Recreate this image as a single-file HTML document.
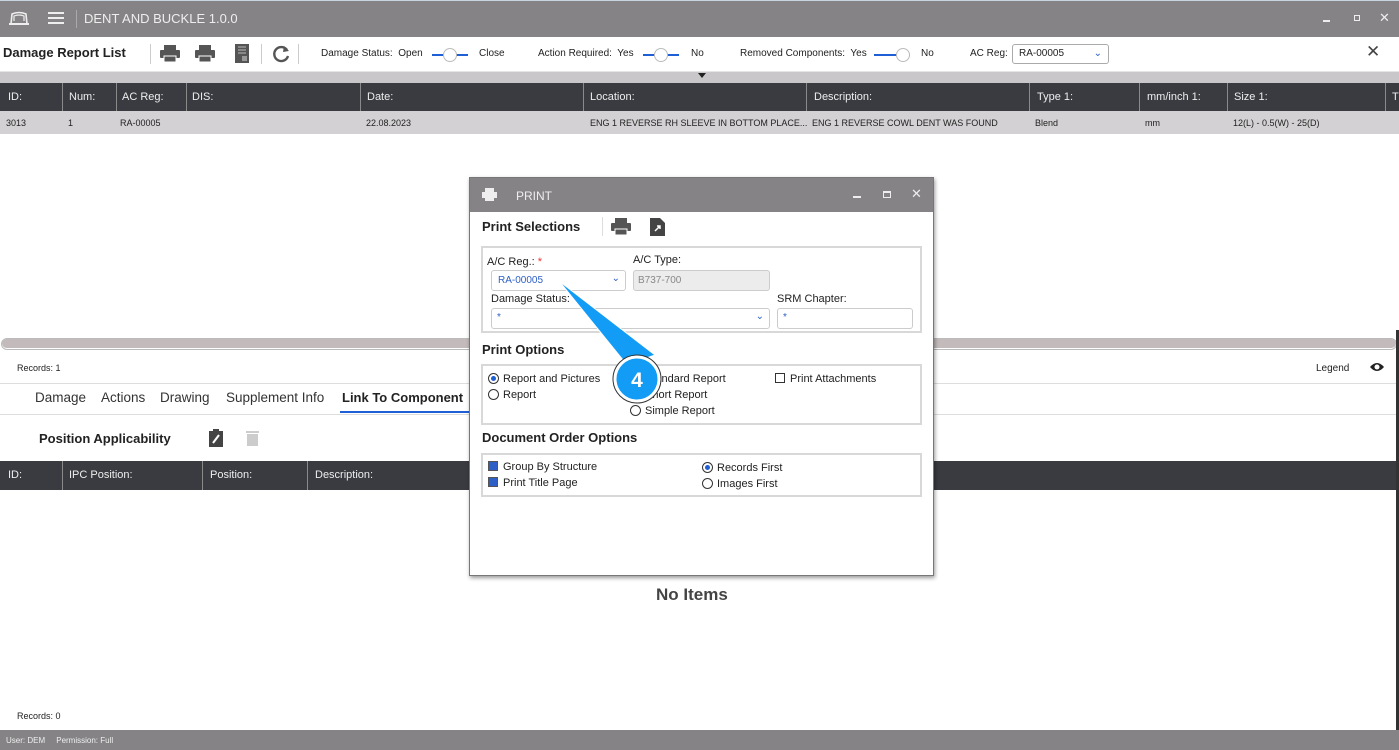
<!DOCTYPE html>
<html><head><meta charset="utf-8"><style>
*{box-sizing:border-box;margin:0;padding:0}
body{width:1399px;height:750px;overflow:hidden;background:#fff;font-family:"Liberation Sans",sans-serif;position:relative;color:#222}
.a{position:absolute;white-space:nowrap}
.s{font-size:10px}
.hdr{background:#393b41;color:#eee;font-size:11px}
.vd{position:absolute;top:0;bottom:0;width:1px;background:#8a8a8a}
.tg{position:absolute;height:2px;background:#1e5fd6;width:36px}
.tg i{position:absolute;top:-6px;width:14px;height:14px;border-radius:50%;background:#fff;border:1px solid #bbb}
.rad{display:inline-block;width:11px;height:11px;border-radius:50%;border:1.3px solid #333;vertical-align:-2px;margin-right:4px;position:relative}
.rad.on:after{content:"";position:absolute;left:1.5px;top:1.5px;width:5.5px;height:5.5px;border-radius:50%;background:#1e5fd6}
.chk{display:inline-block;width:10px;height:10px;border:1.3px solid #333;vertical-align:-1px;margin-right:5px;background:#fff}
.chk.on{background:#2d5fc7;border-color:#555}
.dl{font-size:11px;color:#222}
</style></head><body>
<div class="a" style="left:0;top:0;width:1399px;height:37px;background:#858386;border-top:1px solid #c8d4e0"></div>
<svg class="a" style="left:9px;top:11px" width="20" height="15" viewBox="0 0 20 15"><path d="M2 13 L3 3 Q10 0 17 3 L18 13 Z" fill="none" stroke="#eee" stroke-width="1.6"/><path d="M5 10 L5 5 Q10 3 15 5 L15 10" fill="none" stroke="#eee" stroke-width="1.2"/><rect x="0" y="12" width="20" height="2" fill="#eee"/></svg>
<div class="a" style="left:48px;top:12px;width:16px;height:2px;background:#eee;box-shadow:0 5px 0 #eee,0 10px 0 #eee"></div>
<div class="a" style="left:76px;top:10px;width:1px;height:18px;background:#aaa"></div>
<div class="a" style="left:84px;top:11px;font-size:13px;color:#eee">DENT AND BUCKLE 1.0.0</div>
<div class="a" style="left:1323px;top:20px;width:7px;height:2px;background:#eee"></div>
<div class="a" style="left:1354px;top:15px;width:6px;height:6px;border:1px solid #eee"></div>
<div class="a" style="left:1379px;top:10px;font-size:13px;color:#eee">✕</div>
<div class="a" style="left:3px;top:45px;font-size:13px;font-weight:bold">Damage Report List</div>
<div class="a" style="left:150px;top:44px;width:1px;height:20px;background:#ccc"></div>
<svg class="a" style="left:160px;top:45px" width="20" height="18"><rect x="4" y="0" width="12" height="5" fill="#555"/><rect x="0" y="5" width="20" height="8" rx="1" fill="#555"/><rect x="4" y="11" width="12" height="6" fill="#555" stroke="#fff" stroke-width="1"/></svg>
<svg class="a" style="left:195px;top:45px" width="20" height="18"><rect x="4" y="0" width="12" height="5" fill="#555"/><rect x="0" y="5" width="20" height="8" rx="1" fill="#555"/><rect x="4" y="11" width="12" height="6" fill="#555" stroke="#fff" stroke-width="1"/></svg>
<svg class="a" style="left:234px;top:44px" width="16" height="20"><rect x="1" y="0" width="14" height="19" fill="#555"/><path d="M4 3h8M4 6h8M4 9h8" stroke="#999" stroke-width="1.5"/><rect x="8" y="12" width="5" height="5" fill="#999"/></svg>
<div class="a" style="left:261px;top:44px;width:1px;height:20px;background:#ccc"></div>
<svg class="a" style="left:271px;top:44px" width="20" height="20"><path d="M16 6 A7 7 0 1 0 17 12" fill="none" stroke="#555" stroke-width="2.4"/><path d="M13 2 L18 7 L12 8 Z" fill="#555"/></svg>
<div class="a" style="left:298px;top:44px;width:1px;height:20px;background:#ccc"></div>
<div class="a s" style="left:321px;top:48px">Damage Status:&nbsp; Open</div>
<div class="tg" style="left:432px;top:54px"><i style="left:11px"></i></div>
<div class="a s" style="left:479px;top:48px">Close</div>
<div class="a s" style="left:538px;top:48px">Action Required:&nbsp; Yes</div>
<div class="tg" style="left:643px;top:54px"><i style="left:11px"></i></div>
<div class="a s" style="left:691px;top:48px">No</div>
<div class="a s" style="left:740px;top:48px">Removed Components:&nbsp; Yes</div>
<div class="tg" style="left:874px;top:54px"><i style="left:22px"></i></div>
<div class="a s" style="left:921px;top:48px">No</div>
<div class="a s" style="left:970px;top:48px">AC Reg:</div>
<div class="a s" style="left:1012px;top:44px;width:97px;height:20px;border:1px solid #aaa;border-radius:3px;padding:3px 6px">RA-00005<span style="position:absolute;right:6px;color:#2d5fc7">⌄</span></div>
<div class="a" style="left:1366px;top:42px;font-size:17px;color:#444">✕</div>
<div class="a" style="left:0;top:71px;width:1399px;height:12px;background:#c9c7c9;border-top:1px solid #e5e5e5"></div>
<div class="a" style="left:698px;top:73px;width:0;height:0;border-left:4px solid transparent;border-right:4px solid transparent;border-top:5px solid #222"></div>
<div class="a hdr" style="left:0;top:83px;width:1399px;height:28px">
<div class="vd" style="left:62px"></div><div class="vd" style="left:116px"></div><div class="vd" style="left:186px"></div><div class="vd" style="left:360px"></div><div class="vd" style="left:583px"></div><div class="vd" style="left:806px"></div><div class="vd" style="left:1029px"></div><div class="vd" style="left:1139px"></div><div class="vd" style="left:1227px"></div><div class="vd" style="left:1385px"></div>
<span class="a" style="left:8px;top:8px">ID:</span><span class="a" style="left:69px;top:8px">Num:</span><span class="a" style="left:122px;top:8px">AC Reg:</span><span class="a" style="left:192px;top:8px">DIS:</span><span class="a" style="left:367px;top:8px">Date:</span><span class="a" style="left:590px;top:8px">Location:</span><span class="a" style="left:814px;top:8px">Description:</span><span class="a" style="left:1037px;top:8px">Type 1:</span><span class="a" style="left:1147px;top:8px">mm/inch 1:</span><span class="a" style="left:1234px;top:8px">Size 1:</span><span class="a" style="left:1392px;top:8px">T</span></div>
<div class="a" style="left:0;top:111px;width:1399px;height:23px;background:#d3d1d3;font-size:9px">
<span class="a" style="left:6px;top:7px">3013</span><span class="a" style="left:68px;top:7px">1</span><span class="a" style="left:120px;top:7px">RA-00005</span><span class="a" style="left:366px;top:7px">22.08.2023</span><span class="a" style="left:590px;top:7px">ENG 1 REVERSE RH SLEEVE IN BOTTOM PLACE...</span><span class="a" style="left:812px;top:7px">ENG 1 REVERSE COWL DENT WAS FOUND</span><span class="a" style="left:1035px;top:7px">Blend</span><span class="a" style="left:1145px;top:7px">mm</span><span class="a" style="left:1233px;top:7px">12(L) - 0.5(W) - 25(D)</span></div>
<div class="a" style="left:1px;top:338px;width:1396px;height:12px;border:1px solid #bbb;border-radius:6px;background:#fff"></div>
<div class="a" style="left:2px;top:339px;width:1394px;height:9px;border-radius:5px;background:#c3bbbb"></div>
<div class="a" style="left:1396px;top:330px;width:3px;height:400px;background:#333"></div>
<div class="a" style="left:17px;top:363px;font-size:9px">Records: 1</div>
<div class="a" style="left:1316px;top:363px;font-size:10px">Legend</div>
<svg class="a" style="left:1369px;top:361px" width="16" height="12"><path d="M1 6 Q8 -2 15 6 Q8 14 1 6Z" fill="#222"/><circle cx="8" cy="6" r="2.5" fill="#fff"/></svg>
<div class="a" style="left:0;top:383px;width:1396px;height:1px;background:#ddd"></div>
<div class="a" style="left:35px;top:390px;font-size:13.5px;color:#333">Damage</div>
<div class="a" style="left:101px;top:390px;font-size:13.5px;color:#333">Actions</div>
<div class="a" style="left:160px;top:390px;font-size:13.5px;color:#333">Drawing</div>
<div class="a" style="left:226px;top:390px;font-size:13.5px;color:#333">Supplement Info</div>
<div class="a" style="left:342px;top:390px;font-size:13px;font-weight:bold">Link To Component</div>
<div class="a" style="left:340px;top:411px;width:135px;height:2px;background:#1e5fd6"></div>
<div class="a" style="left:0;top:414px;width:1396px;height:1px;background:#ddd"></div>
<div class="a" style="left:39px;top:431px;font-size:13px;font-weight:bold">Position Applicability</div>
<svg class="a" style="left:208px;top:429px" width="16" height="19"><rect x="1" y="2" width="14" height="16" fill="#444"/><rect x="5" y="0" width="6" height="4" fill="#444"/><path d="M5 14 L11 6" stroke="#fff" stroke-width="2"/></svg>
<svg class="a" style="left:245px;top:430px" width="15" height="17"><rect x="1" y="1" width="13" height="2" fill="#ccc"/><rect x="2" y="4" width="11" height="12" fill="#ccc"/></svg>
<div class="a hdr" style="left:0;top:461px;width:1396px;height:29px">
<div class="vd" style="left:62px"></div><div class="vd" style="left:202px"></div><div class="vd" style="left:307px"></div>
<span class="a" style="left:8px;top:8px">ID:</span><span class="a" style="left:69px;top:8px">IPC Position:</span><span class="a" style="left:210px;top:8px">Position:</span><span class="a" style="left:315px;top:8px">Description:</span></div>
<div class="a" style="left:656px;top:585px;font-size:17px;font-weight:bold;color:#444">No Items</div>
<div class="a" style="left:17px;top:711px;font-size:9px">Records: 0</div>
<div class="a" style="left:0;top:730px;width:1399px;height:20px;background:#858386;color:#eee;font-size:8px;padding:6px 6px">User: DEM&nbsp;&nbsp;&nbsp;&nbsp; Permission: Full</div>
<div class="a" style="left:469px;top:177px;width:465px;height:399px;background:#fff;border:1px solid #777;box-shadow:1px 2px 4px rgba(0,0,0,.4)"></div>
<div class="a" style="left:470px;top:178px;width:463px;height:34px;background:#858386"></div>
<svg class="a" style="left:482px;top:188px" width="15" height="13"><rect x="3" y="0" width="9" height="4" fill="#eee"/><rect x="0" y="4" width="15" height="6" fill="#eee"/><rect x="3" y="9" width="9" height="4" fill="#eee"/></svg>
<div class="a" style="left:516px;top:189px;font-size:12px;color:#eee">PRINT</div>
<div class="a" style="left:853px;top:196px;width:8px;height:2px;background:#eee"></div>
<div class="a" style="left:883px;top:191px;width:8px;height:7px;border:1px solid #eee;border-top-width:2px"></div>
<div class="a" style="left:911px;top:186px;font-size:13px;color:#eee">✕</div>
<div class="a" style="left:482px;top:219px;font-size:13px;font-weight:bold">Print Selections</div>
<div class="a" style="left:602px;top:217px;width:1px;height:19px;background:#ddd"></div>
<svg class="a" style="left:611px;top:218px" width="20" height="17"><rect x="4" y="0" width="12" height="5" fill="#555"/><rect x="0" y="5" width="20" height="8" rx="1" fill="#555"/><rect x="4" y="11" width="12" height="6" fill="#555" stroke="#fff"/></svg>
<svg class="a" style="left:650px;top:218px" width="15" height="18"><path d="M0 0H10L15 5V18H0Z" fill="#444"/><path d="M5 13 L10 8 M7 8H10V11" stroke="#fff" stroke-width="1.5" fill="none"/></svg>
<div class="a" style="left:481px;top:246px;width:441px;height:87px;border:2px solid #d8d8d8"></div>
<div class="a dl" style="left:487px;top:256px">A/C Reg.: <span style="color:#e33">*</span></div>
<div class="a dl" style="left:491px;top:270px;width:135px;height:21px;border:1px solid #ccc;border-radius:3px;padding:4px 6px;color:#2d5fc7;font-size:10px">RA-00005<span style="position:absolute;right:5px;top:2px">⌄</span></div>
<div class="a dl" style="left:633px;top:254px">A/C Type:</div>
<div class="a" style="left:633px;top:270px;width:137px;height:21px;border:1px solid #ccc;border-radius:3px;background:#ececec;padding:4px 4px;font-size:10px;color:#888">B737-700</div>
<div class="a dl" style="left:491px;top:293px">Damage Status:</div>
<div class="a dl" style="left:491px;top:308px;width:279px;height:21px;border:1px solid #ccc;border-radius:3px;padding:3px 5px;color:#2d5fc7;font-size:10px">*<span style="position:absolute;right:5px;top:2px">⌄</span></div>
<div class="a dl" style="left:777px;top:293px">SRM Chapter:</div>
<div class="a dl" style="left:777px;top:308px;width:136px;height:21px;border:1px solid #ccc;border-radius:3px;padding:3px 5px;color:#2d5fc7;font-size:10px">*</div>
<div class="a" style="left:482px;top:342px;font-size:13px;font-weight:bold">Print Options</div>
<div class="a" style="left:481px;top:364px;width:441px;height:61px;border:2px solid #d8d8d8"></div>
<div class="a dl" style="left:488px;top:373px"><span class="rad on"></span>Report and Pictures</div>
<div class="a dl" style="left:488px;top:389px"><span class="rad"></span>Report</div>
<div class="a dl" style="left:630px;top:373px"><span class="rad"></span>Standard Report</div>
<div class="a dl" style="left:630px;top:389px"><span class="rad"></span>Short Report</div>
<div class="a dl" style="left:630px;top:405px"><span class="rad"></span>Simple Report</div>
<div class="a dl" style="left:775px;top:373px"><span class="chk"></span>Print Attachments</div>
<div class="a" style="left:482px;top:430px;font-size:13px;font-weight:bold">Document Order Options</div>
<div class="a" style="left:481px;top:453px;width:441px;height:44px;border:2px solid #d8d8d8"></div>
<div class="a dl" style="left:488px;top:461px"><span class="chk on"></span>Group By Structure</div>
<div class="a dl" style="left:488px;top:477px"><span class="chk on"></span>Print Title Page</div>
<div class="a dl" style="left:702px;top:462px"><span class="rad on"></span>Records First</div>
<div class="a dl" style="left:702px;top:478px"><span class="rad"></span>Images First</div>
<svg class="a" style="left:550px;top:270px" width="120" height="140"><path d="M9 11 L77 95 L105 85 Z" fill="#139cf5" stroke="#fff" stroke-width="1"/><circle cx="87" cy="109" r="22" fill="#139cf5" stroke="#fff" stroke-width="3"/><circle cx="87" cy="109" r="24" fill="none" stroke="#333" stroke-width="1"/><text x="87" y="117" text-anchor="middle" font-family="Liberation Sans" font-weight="bold" font-size="21" fill="#fff">4</text></svg>
</body></html>
